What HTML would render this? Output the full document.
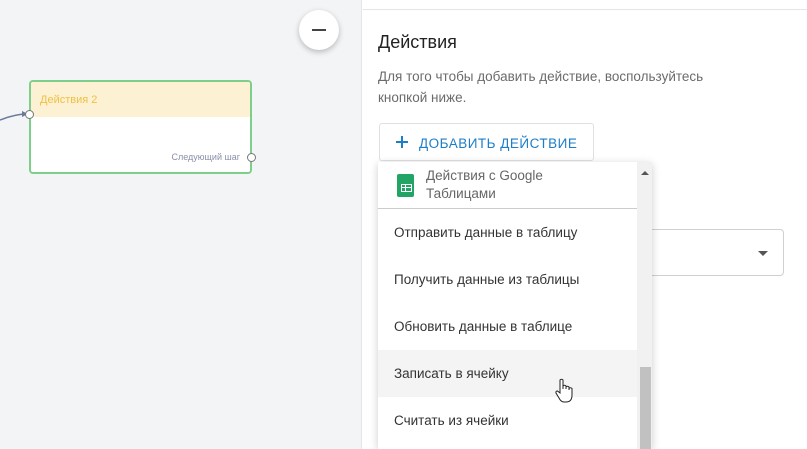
<!DOCTYPE html>
<html style="overflow:hidden;height:449px"><head><meta charset="utf-8"><style>
*{box-sizing:border-box;margin:0;padding:0}
body{width:807px;height:449px;overflow:hidden;position:relative;font-family:"Liberation Sans",Arial,sans-serif;background:#fff}
.canvas{position:absolute;left:0;top:0;width:362px;height:449px;background:#f3f4f6;border-right:1px solid #e3e5e8}
.minus{position:absolute;left:299px;top:10px;width:40px;height:40px;border-radius:50%;background:#fff;box-shadow:0 2px 6px rgba(0,0,0,.25)}
.minus:after{content:"";position:absolute;left:13px;top:19px;width:14px;height:2px;background:#444}
.node{position:absolute;left:29px;top:80px;width:223px;height:94px;border:2px solid #7fcf8c;border-radius:4px;background:#fff;overflow:hidden}
.node .hd{height:35px;background:#fdf1d4;color:#f0c044;font-size:11px;padding:12px 0 0 9px}
.node .nx{position:absolute;right:10px;top:70px;font-size:9px;color:#8a90a8}
.dot{position:absolute;width:9px;height:9px;border:1px solid #777;border-radius:50%;background:#fff}
.topline{position:absolute;left:363px;top:9px;width:444px;height:1px;background:#e3e5e8}
h2{position:absolute;left:378px;top:32px;font-size:18px;font-weight:normal;color:#222}
.desc{position:absolute;left:378px;top:66px;width:360px;font-size:13.5px;line-height:21px;color:#6b6b6b}
.btn{position:absolute;left:379px;top:123px;width:215px;height:38px;border:1px solid #e0e0e0;border-radius:3px;color:#1e7dc7;font-size:13.5px;letter-spacing:.5px;padding:12px 0 0 16px}
.btn b{position:absolute;left:16px;top:12px;width:12px;height:12px}
.btn b:before{content:"";position:absolute;left:0;top:5px;width:12px;height:2px;background:#1e7dc7}
.btn b:after{content:"";position:absolute;left:5px;top:0;width:2px;height:12px;background:#1e7dc7}
.sel{position:absolute;left:640px;top:229px;width:144px;height:47px;border:1px solid #d0d0d0;border-radius:4px}
.sel:after{content:"";position:absolute;right:15px;top:21px;border:5px solid transparent;border-top:5px solid #555}
.dd{position:absolute;left:378px;top:162px;width:274px;height:287px;background:#fff;box-shadow:0 2px 8px rgba(0,0,0,.2);overflow:hidden}
.dh{height:47px;border-bottom:1px solid #ccc;width:259px;position:relative;color:#666;font-size:13.5px;line-height:18px;padding:5px 0 0 48px}
.ic{position:absolute;left:19px;top:12px;width:17px;height:23px;background:#21a464;border-radius:2px}
.ic:after{content:"";position:absolute;left:4px;top:10px;width:9px;height:6px;border:1px solid #fff;background:linear-gradient(#fff,#fff) 3px 0/1px 100% no-repeat,linear-gradient(#fff,#fff) 0 2px/100% 1px no-repeat}
.it{height:47px;width:259px;font-size:13.5px;color:#333;padding:16px 0 0 16px}
.it.h{background:#f4f4f4}
.sb{position:absolute;left:637px;top:162px;width:15px;height:287px;background:#f1f1f1}
.th{position:absolute;left:640px;top:367px;width:11px;height:82px;background:#c1c1c1}
.ar{position:absolute;left:641px;top:167px;border:4px solid transparent;border-bottom:4px solid #555}
</style></head><body>
<div class="canvas"></div>
<div class="minus"></div>
<svg style="position:absolute;left:0;top:100px" width="40" height="30"><path d="M0 20 C10 16 18 14 27 14" stroke="#6b7a9c" stroke-width="1.5" fill="none"/><path d="M22 11 L28 14 L22 17z" fill="#6b7a9c"/></svg>
<div class="node"><div class="hd">Действия 2</div><div class="nx">Следующий шаг</div></div>
<div class="dot" style="left:25px;top:110px"></div>
<div class="dot" style="left:247px;top:153px"></div>
<div class="topline"></div>
<h2>Действия</h2>
<div class="desc">Для того чтобы добавить действие, воспользуйтесь<br>кнопкой ниже.</div>
<div class="btn"><b></b><span style="margin-left:23px">ДОБАВИТЬ ДЕЙСТВИЕ</span></div>
<div class="sel"></div>
<div class="dd">
<div class="dh"><div class="ic"></div>Действия с Google<br>Таблицами</div>
<div class="it">Отправить данные в таблицу</div>
<div class="it">Получить данные из таблицы</div>
<div class="it">Обновить данные в таблице</div>
<div class="it h">Записать в ячейку</div>
<div class="it">Считать из ячейки</div>
</div>
<div class="sb"></div><div class="th"></div><div class="ar"></div>
<svg style="position:absolute;left:555px;top:378px" width="20" height="26" viewBox="0 0 20 26"><path d="M5 2 Q6.5 0.5 8 2 V11 V8 Q9.5 6.5 11 8 V11 V9 Q12.5 7.5 14 9 V12 V10.5 Q15.5 9 17 10.5 V17 Q17 24 11 24 H9 Q6 24 4 20 L1 15 Q0.5 13 2.5 13 L5 15z" fill="#fff" stroke="#222" stroke-width="1"/></svg>
</body></html>
